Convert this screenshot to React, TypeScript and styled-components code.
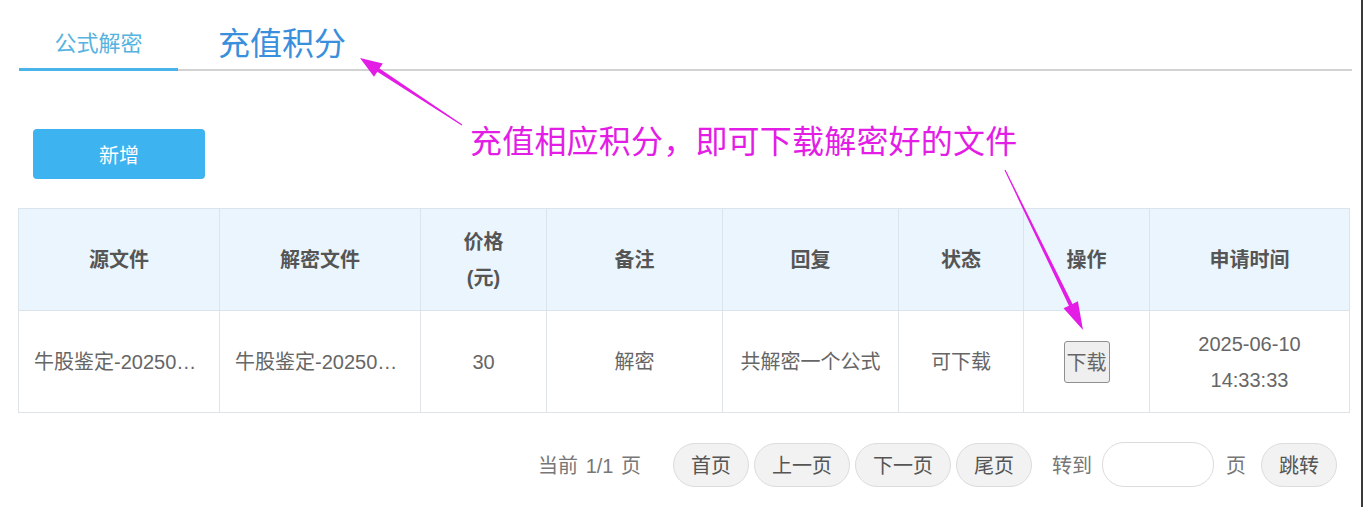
import styled, { createGlobalStyle } from "styled-components";

const GlobalStyle = createGlobalStyle`
  html, body {
    margin: 0;
    padding: 0;
    background: #fff;
  }
  body {
    font-family: "Liberation Sans", "Noto Sans CJK SC", sans-serif;
  }
`

const Page = styled.div`
  position: relative;
  width: 1363px;
  height: 507px;
  overflow: hidden;
  padding: 0 12px 0 18px;
  box-sizing: border-box;
  border-right: 2px solid #3a3a3a;
`

const TabBar = styled.div`
  display: flex;
  height: 69px;
  margin-left: 1px;
  margin-right: -3px;
  border-bottom: 2px solid #d2d2d2;
`

const Tab = styled.div<{ $active?: boolean; $big?: boolean }>`
  display: flex;
  align-items: center;
  justify-content: center;
  padding-top: 13px;
  width: ${p => (p.$big ? "auto" : "159px")};
  margin-left: ${p => (p.$big ? "40px" : "0")};
  font-size: ${p => (p.$big ? "32px" : "22px")};
  color: ${p => (p.$big ? "#3a8fdc" : "#55b3e0")};
  border-bottom: ${p => (p.$active ? "3px solid #4ab3ea" : "none")};
  margin-bottom: ${p => (p.$active ? "-2px" : "0")};
  box-sizing: border-box;
`

const AddButton = styled.button`
  display: block;
  margin: 58px 0 0 15px;
  width: 172px;
  height: 50px;
  border: none;
  border-radius: 4px;
  background: #3db3f0;
  color: #fff;
  font-family: inherit;
  font-size: 20px;
`

const Table = styled.table`
  margin-top: 29px;
  width: 1331px;
  border-collapse: collapse;
  table-layout: fixed;
`

const Th = styled.th`
  height: 101px;
  background: #eaf5fd;
  border: 1px solid #dbe4eb;
  color: #555;
  font-size: 20px;
  font-weight: bold;
  line-height: 36px;
  text-align: center;
  padding: 0;
`

const Td = styled.td<{ $clip?: boolean }>`
  height: 101px;
  border: 1px solid #dfe4e8;
  color: #666;
  font-size: 20px;
  line-height: 36px;
  padding: ${p => (p.$clip ? "0 18px 0 15px" : "0")};
  white-space: ${p => (p.$clip ? "nowrap" : "normal")};
  overflow: hidden;
  text-overflow: ellipsis;
  text-align: ${p => (p.$clip ? "left" : "center")};
`

const DownloadButton = styled.button`
  width: 46px;
  height: 42px;
  padding: 0;
  border: 1px solid #8f8f8f;
  border-radius: 3px;
  background: #efefef;
  color: #666;
  font-family: inherit;
  font-size: 20px;
  vertical-align: middle;
`

const Pager = styled.div`
  display: flex;
  align-items: center;
  justify-content: flex-end;
  margin-top: 29px;
  padding-right: 12px;
  font-size: 20px;
`

const PagerText = styled.span<{ $gap?: number }>`
  color: #777;
  margin-left: ${p => p.$gap ?? 0}px;
  word-spacing: 2px;
`

const PageButton = styled.button<{ $gap?: number }>`
  height: 44px;
  padding: 0 17px;
  margin-left: ${p => p.$gap ?? 5}px;
  border: 1px solid #dcdcdc;
  border-radius: 22px;
  background: #f2f2f2;
  color: #555;
  font-family: inherit;
  font-size: 20px;
`

const PageInput = styled.input`
  width: 112px;
  height: 45px;
  margin-left: 10px;
  box-sizing: border-box;
  border: 1px solid #dcdcdc;
  border-radius: 22px;
  background: #fff;
  outline: none;
`

const Annotation = styled.div`
  position: absolute;
  left: 470px;
  top: 119px;
  font-size: 32px;
  line-height: 40px;
  color: #e31ce6;
  letter-spacing: 0.2px;
  font-family: "Noto Sans CJK SC", sans-serif;
`

const Overlay = styled.svg`
  position: absolute;
  left: 0;
  top: 0;
  pointer-events: none;
`

const columns = [201, 201, 126, 176, 176, 125, 126, 200]

export default function App() {
  return (
    <>
      <GlobalStyle />
      <Page>
        <TabBar>
          <Tab $active>公式解密</Tab>
          <Tab $big>充值积分</Tab>
        </TabBar>

        <AddButton>新增</AddButton>

        <Table>
          <colgroup>
            {columns.map((w, i) => <col key={i} style={{ width: w }} />)}
          </colgroup>
          <thead>
            <tr>
              <Th>源文件</Th>
              <Th>解密文件</Th>
              <Th>价格<br />(元)</Th>
              <Th>备注</Th>
              <Th>回复</Th>
              <Th>状态</Th>
              <Th>操作</Th>
              <Th>申请时间</Th>
            </tr>
          </thead>
          <tbody>
            <tr>
              <Td $clip>牛股鉴定-20250610143333.txt</Td>
              <Td $clip>牛股鉴定-20250610143333.txt</Td>
              <Td>30</Td>
              <Td>解密</Td>
              <Td>共解密一个公式</Td>
              <Td>可下载</Td>
              <Td><DownloadButton>下载</DownloadButton></Td>
              <Td>2025-06-10<br />14:33:33</Td>
            </tr>
          </tbody>
        </Table>

        <Pager>
          <PagerText>当前 1/1 页</PagerText>
          <PageButton $gap={32}>首页</PageButton>
          <PageButton>上一页</PageButton>
          <PageButton>下一页</PageButton>
          <PageButton>尾页</PageButton>
          <PagerText $gap={20}>转到</PagerText>
          <PageInput />
          <PagerText $gap={12}>页</PagerText>
          <PageButton $gap={15}>跳转</PageButton>
        </Pager>

        <Annotation>充值相应积分，即可下载解密好的文件</Annotation>
        <Overlay width="1363" height="507" viewBox="0 0 1363 507">
          <polygon
            fill="#e31ce6"
            points="462.3,124.6 379.5,68.4 382.8,63.4 360,58 374,76.8 377.3,71.8 461.7,125.4"
          />
          <polygon
            fill="#e31ce6"
            points="1004.5,170.2 1068.9,305.7 1063.5,308.3 1083,330 1077.9,301.3 1072.5,303.9 1005.5,169.8"
          />
        </Overlay>
      </Page>
    </>
  )
}
